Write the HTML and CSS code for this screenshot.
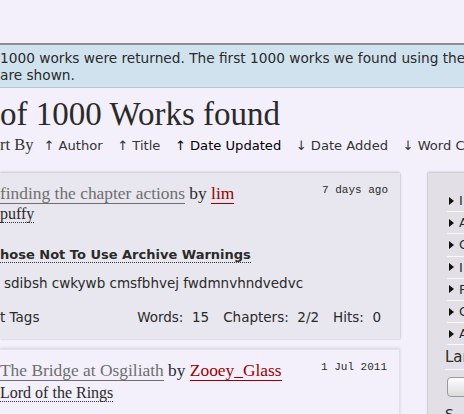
FILE: index.html
```html
<!DOCTYPE html>
<html>
<head>
<meta charset="utf-8">
<link rel="stylesheet" href="styles.css">
</head>
<body>
<div class="notice">
  <p>1000 works were returned. The first 1000 works we found using the</p>
  <p>are shown.</p>
</div>
<h2 class="heading">of 1000 Works found</h2>
<div class="sort">
  <span class="sort-label">rt By</span>
  <span class="sort-opt">↑ Author</span>
  <span class="sort-opt">↑ Title</span>
  <span class="sort-opt current">↑ Date Updated</span>
  <span class="sort-opt">↓ Date Added</span>
  <span class="sort-opt">↓ Word C</span>
</div>
<div class="layout">
  <div class="main">
    <div class="blurb">
      <div class="blurb-head">
        <div class="title-line"><a class="work">finding the chapter actions</a> by <a class="author">lim</a></div>
        <div class="date">7 days ago</div>
      </div>
      <div class="fandom"><a>puffy</a></div>
      <div class="warning"><a>hose Not To Use Archive Warnings</a></div>
      <div class="summary">sdibsh cwkywb cmsfbhvej fwdmnvhndvedvc</div>
      <div class="stats-row">
        <span class="series">t Tags</span>
        <span class="stats"><span>Words:&nbsp; 15</span><span>Chapters:&nbsp; 2/2</span><span>Hits:&nbsp; 0</span></span>
      </div>
    </div>
    <div class="blurb blurb-light">
      <div class="blurb-head">
        <div class="title-line"><a class="work">The Bridge at Osgiliath</a> by <a class="author">Zooey_Glass</a></div>
        <div class="date">1 Jul 2011</div>
      </div>
      <div class="fandom fandom-2"><a>Lord of the Rings</a></div>
    </div>
  </div>
  <div class="sidebar">
    <ul class="filters">
      <li><span class="tri"></span>I</li>
      <li><span class="tri"></span>A</li>
      <li><span class="tri"></span>C</li>
      <li><span class="tri"></span>I</li>
      <li><span class="tri"></span>F</li>
      <li><span class="tri"></span>C</li>
      <li><span class="tri"></span>A</li>
    </ul>
    <div class="lang">Lar</div>
    <div class="btn"></div>
    <div class="stat-label">S</div>
  </div>
</div>
</body>
</html>
```
FILE: styles.css
```css
html, body {
  margin: 0;
  padding: 0;
}
body {
  width: 464px;
  height: 414px;
  overflow: hidden;
  background: #f3f0fb;
  color: #2a2a2a;
  font-family: "DejaVu Sans", "Lucida Grande", sans-serif;
}
.notice {
  margin-top: 43px;
  background: #d1e2ef;
  border-top: 2px solid #8a8e94;
  border-bottom: 1px solid #b6c4d0;
  padding: 5px 0 3px;
  font-size: 13.7px;
  line-height: 17px;
  white-space: nowrap;
}
.notice p { margin: 0; }
.heading {
  margin: 8px 0 0;
  font-family: "Liberation Serif", Georgia, serif;
  font-weight: normal;
  font-size: 33px;
  line-height: 36px;
  color: #2a2a2a;
}
.sort {
  display: flex;
  align-items: baseline;
  white-space: nowrap;
  margin-top: 3px;
  font-size: 13.1px;
  color: #333;
}
.sort-label {
  font-family: "Liberation Serif", Georgia, serif;
  font-size: 16.5px;
  margin-right: 10px;
}
.sort-opt { margin-right: 14.5px; }
.sort-opt.current { color: #000; }
.layout {
  display: flex;
  margin-top: 18px;
}
.main {
  width: 400px;
  flex: none;
}
.blurb {
  background: #e8e6ee;
  box-shadow: 0 -1px 2px rgba(0,0,0,0.18), 1px 1px 1px rgba(0,0,0,0.06);
  padding: 9px 12px 10px 0;
  height: 147px;
  margin-bottom: 10px;
}
.blurb-light {
  background: #f3f0fb;
  border: 1px solid #e2dfe8;
  border-left: none;
  box-shadow: 0 -1px 3px rgba(0,0,0,0.12);
}
.blurb-head {
  display: flex;
  justify-content: space-between;
  align-items: flex-start;
}
.title-line {
  font-family: "Liberation Serif", Georgia, serif;
  font-size: 17.4px;
  line-height: 22px;
  white-space: nowrap;
}
.title-line .work {
  color: #6f6f6f;
  text-decoration: none;
  border-bottom: 1px solid #6f6f6f;
}
.title-line .author {
  color: #990000;
  text-decoration: none;
  border-bottom: 1px solid #990000;
}
.date {
  font-family: "Liberation Mono", "Courier New", monospace;
  font-size: 11px;
  line-height: 16px;
  color: #2a2a2a;
}
.fandom {
  font-family: "Liberation Serif", Georgia, serif;
  font-size: 16px;
  line-height: 20px;
  margin-top: 0;
}
.fandom-2 { margin-top: 2px; }
.fandom a {
  border-bottom: 1px dotted #333;
}
.warning {
  margin-top: 22px;
  font-size: 13px;
  font-weight: bold;
  line-height: 18px;
  white-space: nowrap;
}
.warning a { border-bottom: 1px dotted #333; }
.summary {
  margin-top: 10px;
  padding-left: 4px;
  font-size: 13.5px;
  line-height: 18px;
  white-space: nowrap;
}
.stats-row {
  margin-top: 16px;
  display: flex;
  justify-content: space-between;
  font-size: 13.5px;
  line-height: 18px;
}
.stats { display: flex; gap: 14px; padding-right: 7px; }
.sidebar {
  margin-left: 28px;
  width: 100px;
  flex: none;
  background: #e2e0e6;
  box-shadow: 0 -1px 2px rgba(0,0,0,0.2), -1px 0 1px rgba(0,0,0,0.08);
  padding: 17px 0 0 19px;
  height: 260px;
  overflow: hidden;
  white-space: nowrap;
}
.filters {
  list-style: none;
  margin: 0;
  padding: 0;
  font-size: 13px;
}
.filters li {
  height: 21.2px;
  line-height: 21px;
  border-bottom: 1px solid #fafafa;
  display: flex;
  align-items: center;
}
.tri {
  width: 0;
  height: 0;
  border-top: 4px solid transparent;
  border-bottom: 4px solid transparent;
  border-left: 5px solid #111;
  margin: 0 5px 0 2px;
}
.lang {
  font-size: 15px;
  line-height: 20px;
  margin-left: -2px;
  margin-top: 2px;
  padding-bottom: 2px;
  border-bottom: 1px solid #fafafa;
  color: #2a2a2a;
}
.btn {
  margin-top: 7px;
  height: 18px;
  border: 1px solid #999;
  border-radius: 4px;
  background: linear-gradient(#fdfdfd, #dcdcdc);
  width: 60px;
}
.stat-label {
  margin-left: -2px;
  margin-top: 9px;
  font-size: 14px;
}
```
